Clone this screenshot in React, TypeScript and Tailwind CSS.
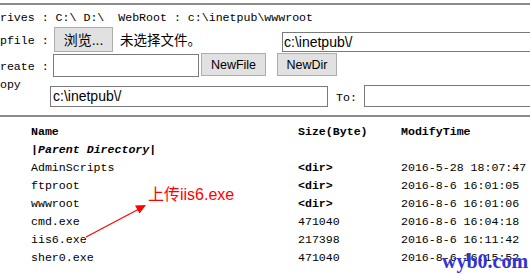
import React from "react";

const mono = { fontFamily: '"Liberation Mono", "Courier New", monospace' };
const sans = { fontFamily: '"Liberation Sans", Arial, "Noto Sans CJK SC", sans-serif' };

const rows: { name: string; size: string; time: string; dir?: boolean }[] = [
  { name: "AdminScripts", size: "<dir>", time: "2016-5-28 18:07:47", dir: true },
  { name: "ftproot", size: "<dir>", time: "2016-8-6 16:01:05", dir: true },
  { name: "wwwroot", size: "<dir>", time: "2016-8-6 16:01:06", dir: true },
  { name: "cmd.exe", size: "471040", time: "2016-8-6 16:04:18" },
  { name: "iis6.exe", size: "217398", time: "2016-8-6 16:11:42" },
  { name: "sher0.exe", size: "471040", time: "2016-8-6 16:15:52" },
];

export default function App() {
  return (
    <div className="relative w-[530px] h-[275px] overflow-hidden bg-white text-black">
      <div className="mt-[3px] h-[2px] bg-[#8c8c8c]" />
      <div className="-ml-[7px] flex flex-col text-[11.6px] leading-[14px]" style={mono}>
        {/* row 1 */}
        <div className="h-[22px] pt-[6px] whitespace-pre">
          {"Drives : C:\\ D:\\  WebRoot : c:\\inetpub\\wwwroot"}
        </div>
        {/* row 2 */}
        <div className="h-[25px] flex items-start">
          <div className="w-[61px] shrink-0 mt-[7px] whitespace-pre">Upfile :</div>
          <div
            className="w-[59px] h-[25px] shrink-0 flex items-center justify-center bg-[#e1e1e1] border border-[#adadad] text-[14px]"
            style={sans}
          >
            浏览...
          </div>
          <div className="ml-[7px] w-[162px] shrink-0 mt-[6px] text-[13.5px] leading-[16px]" style={sans}>
            未选择文件。
          </div>
          <div
            className="w-[260px] h-[20px] shrink-0 mt-[5px] border border-[#7a7a7a] pl-[1px] text-[14px] leading-[18px]"
            style={sans}
          >
            {"c:\\inetpub\\/"}
          </div>
        </div>
        {/* row 3 */}
        <div className="mt-[1px] h-[24px] flex items-start">
          <div className="w-[60px] shrink-0 mt-[7px] whitespace-pre">Create :</div>
          <div className="w-[146px] h-[23px] shrink-0 mt-[1px] border border-[#7a7a7a] bg-white" />
          <div
            className="ml-[2px] w-[65px] h-[23px] shrink-0 flex items-center justify-center bg-[#e1e1e1] border border-[#adadad] text-[12.5px]"
            style={sans}
          >
            NewFile
          </div>
          <div
            className="ml-[11px] w-[60px] h-[23px] shrink-0 flex items-center justify-center bg-[#e1e1e1] border border-[#adadad] text-[12.5px]"
            style={sans}
          >
            NewDir
          </div>
        </div>
        {/* row 4 */}
        <div className="h-[30px] flex items-start">
          <div className="w-[57px] shrink-0 mt-[1px]">Copy</div>
          <div
            className="w-[278px] h-[21px] shrink-0 mt-[9px] border border-[#7a7a7a] pl-[2px] text-[14px] leading-[19px]"
            style={sans}
          >
            {"c:\\inetpub\\/"}
          </div>
          <div className="ml-[8px] w-[21px] shrink-0 mt-[14px]">To:</div>
          <div className="ml-[7px] w-[200px] h-[22px] shrink-0 mt-[8px] border border-[#7a7a7a]" />
        </div>
      </div>
      <div className="mt-[8px] h-[2px] bg-[#8c8c8c]" />
      {/* table */}
      <div className="mt-[6px] pl-[31px] text-[11.6px]" style={mono}>
        <div className="grid grid-cols-[267px_103px_1fr] h-[18px] items-center font-bold">
          <div>Name</div>
          <div>Size(Byte)</div>
          <div>ModifyTime</div>
        </div>
        <div className="grid grid-cols-[267px_103px_1fr] h-[18px] items-center font-bold">
          <div>
            |<span className="italic">Parent Directory</span>|
          </div>
          <div />
          <div />
        </div>
        {rows.map((r) => (
          <div key={r.name} className="grid grid-cols-[267px_103px_1fr] h-[18px] items-center whitespace-nowrap">
            <div>{r.name}</div>
            <div className={r.dir ? "font-bold" : ""}>{r.size}</div>
            <div>{r.time}</div>
          </div>
        ))}
      </div>
      {/* annotation */}
      <div
        className="absolute left-[148px] top-[185px] text-[16px] leading-[20px] text-[#ff0000] whitespace-nowrap"
        style={sans}
      >
        上传iis6.exe
      </div>
      <svg className="absolute left-0 top-0" width="530" height="275" viewBox="0 0 530 275">
        <line x1="86" y1="237" x2="139" y2="209" stroke="#ff0000" strokeWidth="1.2" />
        <polygon points="146,205 139.5,213.5 135,205.5" fill="#ff0000" />
      </svg>
      <div
        className="absolute left-[442px] top-[249px] text-[20px] leading-[24px] font-bold text-[#3232d2] whitespace-nowrap"
        style={{ fontFamily: '"Liberation Serif", "Times New Roman", serif' }}
      >
        wyb0.com
      </div>
    </div>
  );
}
